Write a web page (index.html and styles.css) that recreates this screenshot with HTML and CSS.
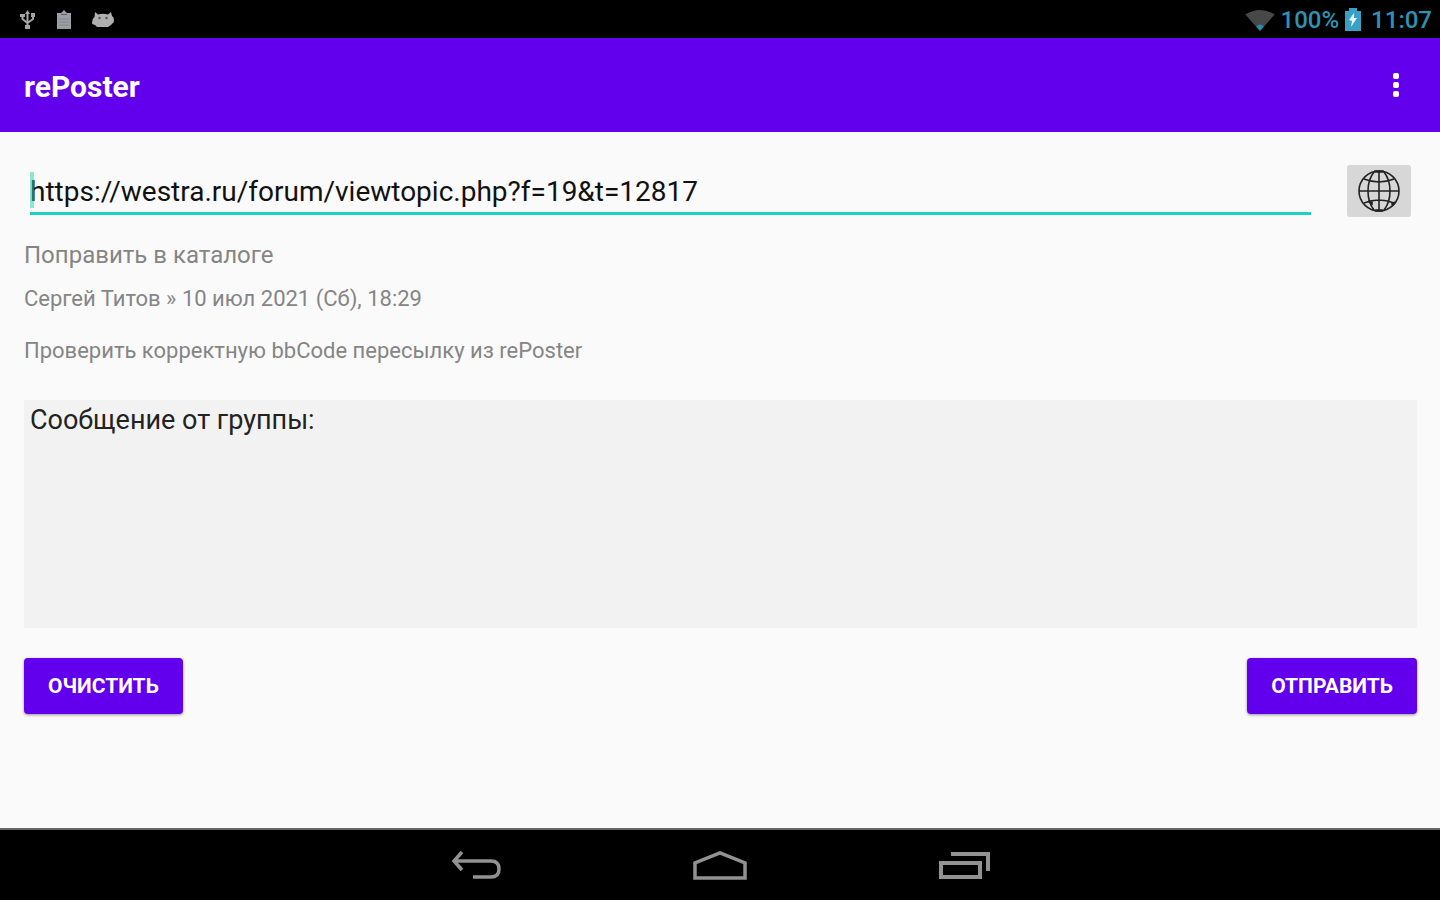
FILE: index.html
```html
<!DOCTYPE html>
<html lang="ru">
<head>
<meta charset="utf-8">
<meta name="viewport" content="width=device-width, initial-scale=1">
<title>rePoster</title>
<link rel="stylesheet" href="styles.css">
</head>
<body>
<div class="status">
  <div class="status-group status-notices">
    <svg width="16" height="20" viewBox="0 0 16 20" fill="none" stroke="#a5a5a5" stroke-width="2" aria-hidden="true">
      <path d="M7.500 3v15M2.500 5v4l5 4M13 4v5l-5.500 4"/><path d="M5 4l2.500-4L10 4z" fill="#a5a5a5" stroke="none"/>
      <path d="M0 4h5v3H0zM11 3h4v4h-4zM5 15h5v4H5z" fill="#a5a5a5" stroke="none"/>
    </svg>
    <svg width="16" height="20" viewBox="0 0 16 20" aria-hidden="true">
      <path d="M1 3h4l3-3 3 3h4v16H1z" fill="#9b9fa3"/><path d="M5 4h6v1H5z" fill="#5d6063"/><path d="M3 9h10M3 12h10M3 15h10" stroke="#858a8e"/>
    </svg>
    <svg width="22" height="18" viewBox="0 0 22 18" aria-hidden="true">
      <path d="M3 1l3 2.500q5-1.500 10 0L19 1l1 4q2.500 1 1.800 6l-2.800 3-3 2H5l-2-2-2.800-1Q-.5 8 2.500 6z" fill="#b0b0b0"/>
      <circle cx="7.500" cy="7" r="1.200" fill="#555"/><circle cx="14.500" cy="7" r="1.200" fill="#555"/>
    </svg>
  </div>
  <div class="status-group status-system">
    <svg width="30" height="22" viewBox="0 0 32 24" aria-hidden="true">
      <path d="M0 6Q16-4 32 6L16 24z" fill="#484848"/><path d="M12 19q4-4 8 0L16 24z" fill="#258eae"/>
    </svg>
    <span>100%</span>
    <svg class="battery" width="16" height="24" viewBox="0 0 16 24" aria-hidden="true">
      <path d="M0 3h4V0h8v3h4v20H0z" fill="#3aa0c4"/><path d="M9 5L4 12l3 1-1 6 6-9H9z" fill="#e8f8fa"/>
    </svg>
    <time>11:07</time>
  </div>
</div>
<header class="appbar">
  <h1 class="title">rePoster</h1>
  <button class="more" type="button" aria-label="Меню">
    <svg width="8" height="26" viewBox="0 0 8 26" fill="#fff"><rect x="1" y="1" width="6" height="6" rx="2"/><rect x="1" y="10" width="6" height="6" rx="2"/><rect x="1" y="19" width="6" height="6" rx="2"/></svg>
  </button>
</header>
<main class="content">
  <div class="url-row">
    <div class="url-field">
      <input class="url" type="text" aria-label="Адрес темы" value="https://westra.ru/forum/viewtopic.php?f=19&amp;t=12817">
      <span class="caret"></span>
    </div>
    <button class="globe" type="button" aria-label="Открыть в браузере">
      <svg width="44" height="44" viewBox="0 0 44 44" fill="none" stroke="#222" stroke-width="1.600">
        <circle cx="22" cy="22" r="20"/><path d="M22 2v40M2 22h40M7 10q15 6 30 0M7 34q15-6 30 0"/>
        <path d="M17 3C9 13 9 31 17 41M27 3c8 10 8 28 0 38"/>
        <path d="M18 2h8v1h-8zM19 41h6v1h-6zM11 32l4 1v2zM35 35l3-2-2 3z" fill="#222"/>
      </svg>
    </button>
  </div>
  <p class="topic">Поправить в каталоге</p>
  <p class="meta">Сергей Титов » 10 июл 2021 (Сб), 18:29</p>
  <p class="excerpt">Проверить корректную bbCode пересылку из rePoster</p>
  <textarea class="message" aria-label="Сообщение">Сообщение от группы:</textarea>
  <div class="actions">
    <button class="btn" type="button">ОЧИСТИТЬ</button>
    <button class="btn" type="button">ОТПРАВИТЬ</button>
  </div>
</main>
<nav class="navbar" aria-label="Системная навигация">
  <button class="nav-btn" type="button" aria-label="Назад">
    <svg width="50" height="30" viewBox="0 0 50 30" fill="none" stroke="#929292" stroke-width="3.500"><path d="M11 1L3 10l8 9M3 10h37q8 0 8 8t-8 8H22"/></svg>
  </button>
  <button class="nav-btn" type="button" aria-label="Домой">
    <svg width="56" height="32" viewBox="0 0 56 32" fill="none" stroke="#929292" stroke-width="3.500"><path d="M3 28V13L28 3l25 10v15z"/></svg>
  </button>
  <button class="nav-btn" type="button" aria-label="Недавние">
    <svg width="52" height="30" viewBox="0 0 52 30" fill="none" stroke="#929292" stroke-width="4"><path d="M3 12h39v14H3zM13 3h37v17"/></svg>
  </button>
</nav>
</body>
</html>
```
FILE: styles.css
```css
* { box-sizing: border-box; }
body {
  margin: 0;
  min-height: 100vh;
  display: flex;
  flex-direction: column;
  background: #fafafa;
  color: #111;
  font-family: Roboto, sans-serif;
}
button { border: 0; padding: 0; background: none; font-family: inherit; cursor: pointer; }
svg { display: block; }

.status {
  display: flex;
  justify-content: space-between;
  align-items: center;
  height: 38px;
  padding: 2px 8px 0 20px;
  background: #000;
  color: #2d93b5;
  font-size: 24px;
  font-weight: 500;
}
.status-group { display: flex; align-items: center; }
.status-notices { gap: 20px; }
.status-system { gap: 6px; }
.battery { margin-right: 4px; }

.appbar {
  display: flex;
  justify-content: space-between;
  align-items: center;
  height: 94px;
  padding: 0 24px;
  background: #6200ee;
  color: #fff;
}
.title { margin: 0; padding-top: 4px; font-size: 30px; line-height: 36px; font-weight: 700; }
.more { display: flex; justify-content: center; width: 40px; padding: 8px 0; }

.content {
  flex: 1;
  display: flex;
  flex-direction: column;
  padding: 33px 23px 32px 24px;
}
.url-row { display: flex; align-items: center; gap: 36px; padding: 0 6px; }
.url-field { position: relative; flex: 1; }
.url {
  display: block;
  width: 100%;
  height: 48px;
  padding: 4px 0 0;
  border: 0;
  border-bottom: 3px solid #1dd3c0;
  outline: 0;
  background: none;
  color: #111;
  font: 400 28px Roboto, sans-serif;
}
.caret { position: absolute; left: 0; top: 5px; width: 4px; height: 36px; background: #1dd3a880; }
.globe {
  display: grid;
  place-items: center;
  width: 64px;
  height: 52px;
  border-radius: 3px;
  background: #d7d7d7;
}
.topic, .meta, .excerpt { margin: 0; color: #858585; }
.topic { margin-top: 22px; font-size: 24px; line-height: 32px; }
.meta { margin-top: 12px; font-size: 22px; line-height: 32px; }
.excerpt { margin-top: 20px; font-size: 22px; line-height: 32px; }
.message {
  display: block;
  width: 100%;
  height: 228px;
  margin-top: 33px;
  padding: 2px 6px;
  border: 0;
  outline: 0;
  resize: none;
  background: #f2f2f2;
  color: #222;
  font: 400 27px/36px Roboto, sans-serif;
}
.actions { display: flex; justify-content: space-between; margin-top: 30px; }
.btn {
  height: 56px;
  padding: 0 24px;
  border-radius: 4px;
  background: #6200ee;
  box-shadow: 0 1px 3px #0006;
  color: #fff;
  font-size: 21px;
  font-weight: 700;
}

.navbar {
  display: flex;
  justify-content: center;
  align-items: center;
  height: 72px;
  padding-top: 2px;
  border-top: 2px solid #666;
  background: #000;
}
.nav-btn { display: grid; place-items: center; width: 244px; height: 68px; }
```
